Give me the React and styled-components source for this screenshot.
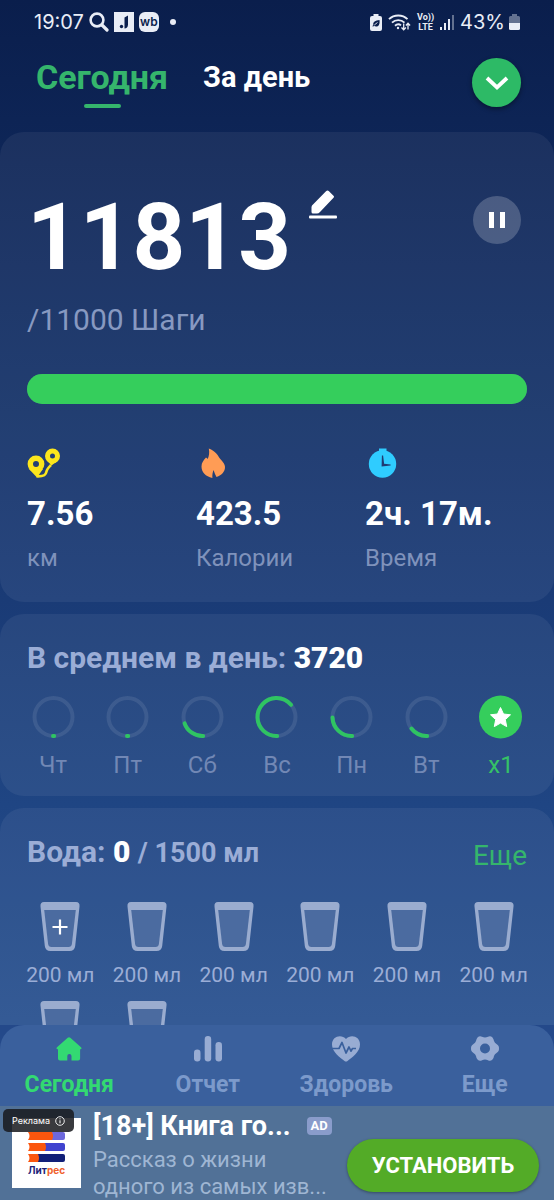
import React from "react";
import styled, { createGlobalStyle } from "styled-components";

const GlobalStyle = createGlobalStyle`
  * {
    box-sizing: border-box;
  }

  body {
    margin: 0;
    font-family: Roboto, "Noto Sans", sans-serif;
    color: #fff;
    background: #0b1f4d;
  }

  button {
    font: inherit;
    color: inherit;
    background: none;
    border: 0;
    padding: 0;
    cursor: pointer;
  }

  svg {
    display: block;
  }
`;

const Screen = styled.div`
  display: flex;
  flex-direction: column;
  height: 100vh;
  overflow: hidden;
  background: linear-gradient(180deg, #0a1e4c 0%, #0d2455 10%, #1a3b76 50%, #1f4583 67%, #28508f 85%, #28508f 100%);
`;

const StatusBar = styled.div`
  display: flex;
  justify-content: space-between;
  align-items: center;
  height: 44px;
  padding: 0 34px;
  font-family: Inter, Roboto, sans-serif;
  font-size: 20px;
  color: #e9edf6;
`;

const StatusGroup = styled.div`
  display: flex;
  align-items: center;
  gap: ${(props) => props.$gap}px;
`;

const Header = styled.header`
  display: flex;
  align-items: flex-start;
  height: 88px;
  padding: 14px 33px 0 36px;
`;

const Tab = styled.button`
  display: flex;
  flex-direction: column;
  align-items: center;
  margin-right: 35px;
  font-size: ${(props) => (props.$active ? 34 : 29)}px;
  line-height: 38px;
  font-weight: 700;
  color: ${(props) => (props.$active ? "#35b56c" : "#fff")};

  &::after {
    content: "";
    width: 37px;
    height: 4px;
    margin-top: 8px;
    border-radius: 2px;
    background: ${(props) => (props.$active ? "#35b56c" : "transparent")};
  }
`;

const RoundButton = styled.button`
  display: flex;
  align-items: center;
  justify-content: center;
  width: ${(props) => props.$size}px;
  height: ${(props) => props.$size}px;
  margin-left: auto;
  border-radius: 50%;
  background: ${(props) => (props.$green ? "#2dba66" : "rgba(255, 255, 255, 0.2)")};
  box-shadow: ${(props) => (props.$green ? "0 2px 5px rgba(0, 0, 0, 0.4)" : "none")};
`;

const Feed = styled.main`
  flex: 1;
  min-height: 0;
  display: flex;
  flex-direction: column;
  gap: 12px;
  overflow: hidden;
`;

const Card = styled.section`
  flex: none;
  padding: ${(props) => props.$padding};
  border-radius: 24px;
  background: rgba(255, 255, 255, 0.06);
`;

const StepsRow = styled.div`
  display: flex;
  align-items: flex-start;
  padding-right: 6px;

  ${RoundButton} {
    margin-top: 6px;
  }
`;

const StepCount = styled.div`
  font-size: 92px;
  line-height: 96px;
  font-weight: 700;
`;

const EditButton = styled.button`
  margin-left: 18px;
`;

const Goal = styled.p`
  margin: 16px 0 36px;
  font-size: 30px;
  line-height: 36px;
  color: #8799c1;
`;

const Bar = styled.div`
  height: 30px;
  border-radius: 15px;
  background: rgba(255, 255, 255, 0.12);
`;

const BarFill = styled.div`
  height: 100%;
  border-radius: 15px;
  background: #35ce5c;
`;

const Stats = styled.div`
  display: grid;
  grid-template-columns: 169px 169px 1fr;
  margin-top: 44px;
`;

const StatValue = styled.div`
  margin-top: 16px;
  font-size: 33px;
  line-height: 40px;
  font-weight: 700;
  white-space: nowrap;
`;

const StatLabel = styled.div`
  margin-top: 8px;
  font-size: 24px;
  line-height: 32px;
  color: #7f92bb;
`;

const CardHead = styled.div`
  display: flex;
  justify-content: space-between;
  align-items: flex-start;
  padding: 0 10px;
`;

const CardTitle = styled.h2`
  margin: 0;
  font-size: 30px;
  line-height: 36px;
  font-weight: 700;
  color: #9badd6;

  strong {
    color: #fff;
  }

  small {
    font-size: 27px;
  }
`;

const MoreLink = styled.a`
  padding-top: 4px;
  font-size: 28px;
  line-height: 36px;
  color: #35b56c;
  text-decoration: none;
`;

const Week = styled.div`
  display: flex;
  justify-content: space-between;
  margin-top: 19px;
`;

const Day = styled.div`
  display: flex;
  flex-direction: column;
  align-items: center;
  width: 52px;
  font-size: 24px;
  line-height: 28px;
  color: ${(props) => (props.$done ? "#35c266" : "#7288b5")};

  svg {
    margin-bottom: 12px;
  }
`;

const Glasses = styled.div`
  display: grid;
  grid-template-columns: repeat(6, 1fr);
  row-gap: 12px;
  margin-top: 28px;
`;

const Glass = styled.button`
  display: flex;
  flex-direction: column;
  align-items: center;
  gap: 9px;
  min-height: 87px;
  font-size: 21px;
  line-height: 28px;
  color: #9badd6;
  white-space: nowrap;
`;

const NavBack = styled.div`
  flex: none;
  background: #24498a;
`;

const Nav = styled.nav`
  display: grid;
  grid-template-columns: repeat(4, 1fr);
  height: 81px;
  padding-top: 10px;
  border-radius: 24px 24px 0 0;
  background: #3a609d;
`;

const NavItem = styled.a`
  display: flex;
  flex-direction: column;
  align-items: center;
  gap: 8px;
  font-size: 23px;
  line-height: 28px;
  font-weight: 700;
  text-decoration: none;
  color: ${(props) => (props.$active ? "#33d972" : "#7c9acb")};

  svg {
    color: ${(props) => (props.$active ? "#33d972" : "#98acd3")};
  }
`;

const Ad = styled.aside`
  position: relative;
  flex: none;
  display: flex;
  height: 94px;
  padding: 0 15px 0 12px;
  overflow: hidden;
  background: #517197;
`;

const AdTag = styled.div`
  position: absolute;
  top: 3px;
  left: 3px;
  display: flex;
  align-items: center;
  gap: 5px;
  height: 23px;
  padding: 0 9px;
  border-radius: 5px;
  font-family: Inter, Roboto, sans-serif;
  font-size: 9px;
  background: rgba(24, 26, 30, 0.86);
`;

const AdLogo = styled.div`
  flex: none;
  width: 69px;
  height: 70px;
  margin: 12px 12px 0 0;
  padding-top: 7px;
  background: #fff;
  text-align: center;
  font-family: Inter, Roboto, sans-serif;
  font-size: 10px;
  line-height: 12px;
  font-weight: 700;
  color: #1c2278;

  svg {
    margin: 0 auto 2px;
  }

  span {
    color: #f0602c;
  }
`;

const AdText = styled.div`
  flex: 1;
  min-width: 0;
`;

const AdTitle = styled.div`
  display: flex;
  align-items: center;
  gap: 16px;
  height: 40px;
  font-size: 27px;
  font-weight: 700;
  white-space: nowrap;
`;

const AdBadge = styled.span`
  padding: 0 4px;
  border-radius: 4px;
  font-size: 13px;
  line-height: 18px;
  background: #8a9ccb;
`;

const AdBody = styled.div`
  font-size: 22px;
  line-height: 27px;
  color: #9fb6d3;
  white-space: nowrap;
`;

const InstallButton = styled.button`
  flex: none;
  width: 192px;
  height: 53px;
  margin-top: 33px;
  border-radius: 27px;
  font-size: 22px;
  font-weight: 700;
  background: #53ab27;
  box-shadow: 0 1px 3px rgba(0, 0, 0, 0.35);
`;

const WbBadge = styled.span`
  display: flex;
  align-items: center;
  justify-content: center;
  width: 20px;
  height: 20px;
  border-radius: 6px;
  font-size: 12px;
  line-height: 18px;
  font-weight: 600;
  color: #0b1f4d;
  background: #e9edf6;
`;

const Dot = styled.span`
  width: 6px;
  height: 6px;
  margin-left: 6px;
  border-radius: 50%;
  background: #e9edf6;
`;

const VolteLabel = styled.span`
  display: flex;
  flex-direction: column;
  align-items: center;
  font-family: Roboto, sans-serif;
  font-size: 9px;
  line-height: 10px;
  font-weight: 700;
`;

const week = [
  { label: "Чт", value: 0.01 },
  { label: "Пт", value: 0.01 },
  { label: "Сб", value: 0.2 },
  { label: "Вс", value: 0.64 },
  { label: "Пн", value: 0.25 },
  { label: "Вт", value: 0.15 },
];

const glasses = ["200 мл", "200 мл", "200 мл", "200 мл", "200 мл", "200 мл", "", ""];

const SearchIcon = () => (
  <svg width="20" height="20" viewBox="0 0 20 20" fill="none" stroke="currentColor" strokeLinecap="round">
    <circle cx="8" cy="8" r="6.4" strokeWidth="2.6" />
    <path d="M13 13 18 18" strokeWidth="3.2" />
  </svg>
);

const NoteIcon = () => (
  <svg width="20" height="20" viewBox="0 0 20 20">
    <path d="M0 0h20v20H0z" fill="currentColor" />
    <path d="M10.5 5.5 14 3.5v9c0 2.5-1.5 4-3.5 4z" fill="#0b1f4d" />
    <circle cx="7.5" cy="14.5" r="1.7" fill="#0b1f4d" />
  </svg>
);

const EcoBatteryIcon = () => (
  <svg width="12" height="17" viewBox="0 0 12 17">
    <path d="M3.5 0h5v2H10a2 2 0 0 1 2 2v11a2 2 0 0 1-2 2H2a2 2 0 0 1-2-2V4a2 2 0 0 1 2-2h1.5z" fill="currentColor" />
    <path d="M9.500 6c.6 4.500-1 6.600-3.300 6.600-1 0-1.700-.3-2.200-.8l-1 .9-.6-.7 1-1C2.500 7.800 5.500 6.600 9.500 6z" fill="#0b1f4d" />
    <path d="M4.300 11 7.500 8.500" stroke="#e9edf6" strokeWidth="0.9" />
  </svg>
);

const WifiIcon = () => (
  <svg width="23" height="17" viewBox="0 0 23 17" fill="none" stroke="currentColor" strokeWidth="1.9">
    <path d="M1 5.200c5-5 13.500-5 18.500 0M4 8.700c3.500-3.500 9-3.500 12.500 0M7 11.700c2-1.800 4.300-1.800 6 -.3" />
    <circle cx="10" cy="14" r="1.2" fill="currentColor" stroke="none" />
    <path d="M15.700 9.500v6M13.500 13.500l2.200 2.300 2.200-2.300M20 15.500v-6M17.900 11.500 20 9.300l2.100 2.200" strokeWidth="1.3" />
  </svg>
);

const SignalIcon = () => (
  <svg width="14" height="15" viewBox="0 0 14 15" fill="currentColor">
    <rect x="0" y="12" width="2" height="3" />
    <rect x="4" y="8" width="2" height="7" />
    <rect x="8" y="4" width="2" height="11" />
    <rect x="12" y="0" width="2" height="15" opacity="0.4" />
  </svg>
);

const BatteryIcon = () => (
  <svg width="11" height="16" viewBox="0 0 11 16" fill="currentColor">
    <path d="M3 0h5v2h1.500A1.500 1.500 0 0 1 11 3.500V9H0V3.500A1.500 1.500 0 0 1 1.500 2H3z" opacity="0.4" />
    <path d="M0 9h11v5.500a1.500 1.500 0 0 1-1.500 1.500h-8A1.500 1.500 0 0 1 0 14.500z" />
  </svg>
);

const ChevronIcon = () => (
  <svg width="24" height="16" viewBox="0 0 24 16" fill="none" stroke="#fff" strokeWidth="3.8">
    <path d="M2 3 12 12.500 22 3" />
  </svg>
);

const EditIcon = () => (
  <svg width="28" height="30" viewBox="0 0 28 30" fill="#fff">
    <path d="M3 15.500 17 1.200q1.500-1.500 3 0L24.500 5.700q1 1 0 2L11 22Q9.500 23.500 8 23.500H4q-1.500 0-1.500-1.500v-5z" />
    <rect x="0" y="25.500" width="28" height="3" rx="1" />
  </svg>
);

const PauseIcon = () => (
  <svg width="16" height="16" viewBox="0 0 16 16" fill="#fff">
    <rect x="0" y="0" width="5" height="16" />
    <rect x="11" y="0" width="5" height="16" />
  </svg>
);

const RouteIcon = () => (
  <svg width="34" height="30" viewBox="0 0 34 30" fill="none" stroke="#fce61c">
    <circle cx="9" cy="16" r="5.700" strokeWidth="5.4" />
    <circle cx="25.500" cy="8" r="5" strokeWidth="5" />
    <path d="M1.500 20.500 10 29.500 16 21z" fill="#fce61c" stroke="none" />
    <path d="M19.500 12 24.500 17.500l6.500-5z" fill="#fce61c" stroke="none" />
    <path d="M9.500 28.300c7.500 .4 9.500-1.200 10-4.800.3-2.500 2-4 4.500-6.500" strokeWidth="2.6" />
  </svg>
);

const FlameIcon = () => (
  <svg width="34" height="30" viewBox="0 0 34 30" fill="#ff9c55">
    <path d="M12.800.5C19.500 3 22 7.500 23.500 10c2 2.500 5.500 5.500 5.500 9 0 4.500-3 8-8.500 10-1-1.800-2-4-3-7-.9 2.500-1.300 5-1.100 8C9.500 28.500 5.500 24 5.500 18.500c0-4 2-6 4.500-9 1 .5 1.300 1 1.700 1.500 1.300-3 2-6.500 1.100-10.500z" />
  </svg>
);

const ClockIcon = () => (
  <svg width="34" height="30" viewBox="0 0 34 30">
    <circle cx="17.500" cy="16" r="13.700" fill="#2fccff" />
    <rect x="14" y="0.500" width="7.500" height="4" fill="#2fccff" />
    <path d="M16.900 7.500h1.200l1 8.300 6.500.8v1l-9 .9z" fill="#1f3b73" />
  </svg>
);

const HomeIcon = () => (
  <svg width="28" height="28" viewBox="0 0 28 28" fill="currentColor">
    <path d="M12.700 2.800q1.300-1 2.600 0l10.700 9.500c1 .9.500 1.900-.5 1.900h-.4v9.300a2 2 0 0 1-2 2h-6.600v-4.500a2 2 0 0 0-4.200 0v4.500H5a2 2 0 0 1-2-2v-9.300h-.5c-1 0-1.500-1-.5-1.900z" />
  </svg>
);

const ReportIcon = () => (
  <svg width="28" height="28" viewBox="0 0 28 28" fill="currentColor">
    <rect x="0" y="14.500" width="6.500" height="12" rx="3.2" />
    <rect x="10.700" y="1" width="6.500" height="25.500" rx="3.2" />
    <rect x="21.500" y="7" width="6.500" height="19.500" rx="3.2" />
  </svg>
);

const HealthIcon = () => (
  <svg width="28" height="28" viewBox="0 0 28 28">
    <path d="M14 4C9.500-1 0 1 0 9.500 0 17 8 22.500 12.500 26q1.500 1.200 3 0C20 22.500 28 17 28 9.500 28 1 18.500-1 14 4z" fill="currentColor" />
    <path d="M0 13.500h7l3-6 4 10.500 3-6 2 4.200 1.500-2.700h3.500" fill="none" stroke="#3a609d" strokeWidth="1.7" strokeLinejoin="round" />
  </svg>
);

const GearIcon = () => (
  <svg width="28" height="28" viewBox="0 0 28 28">
    <path
      d="M6.500 2.500C8 1 9.500.8 11 1.800q3 1.200 6 0c1.500-1 3-.8 4.500.7q1.200 1.500 1.500 3.500 .7 2 2.500 3c2 1.200 2.500 2.500 2.500 4.500s-.5 3.300-2.500 4.500q-1.800 1-2.500 3-.3 2-1.500 3.500c-1.500 1.500-3 1.700-4.500.7q-3-1.200-6 0c-1.500 1-3 .8-4.500-.7Q5.300 23 5 21q-.7-2-2.500-3C.5 16.800 0 15.500 0 13.500S.5 10.200 2.500 9Q4.300 8 5 6q.3-2 1.500-3.500z"
      fill="currentColor"
    />
    <circle cx="14" cy="13.500" r="5" fill="#3a609d" />
  </svg>
);

const BooksIcon = () => (
  <svg width="37" height="37" viewBox="0 0 37 37">
    {["#6d68dc", "#4043cf", "#111f78"].map((color, i) => (
      <g key={color} transform={`translate(0 ${7 + i * 11})`}>
        <rect x="8" y="0" width="29" height="8" rx="2" fill={color} />
        <path d={`M0 0h${24 - i * 7}q2 4 0 8H0q3-4 0-8z`} fill="#fb560e" />
      </g>
    ))}
  </svg>
);

const InfoIcon = () => (
  <svg width="10" height="10" viewBox="0 0 10 10" fill="none" stroke="#fff">
    <circle cx="5" cy="5" r="4.3" strokeWidth="0.9" />
    <path d="M5 4.300v3M5 2.300v1" />
  </svg>
);

const RING = 2 * Math.PI * 19;

const DayRing = ({ value }) => (
  <svg width="43" height="44" viewBox="0 0 43 44" fill="none" strokeWidth="4">
    <circle cx="21.5" cy="22" r="19" stroke="rgba(255, 255, 255, 0.09)" />
    <circle
      cx="21.5"
      cy="22"
      r="19"
      stroke="#2fc462"
      strokeLinecap="round"
      strokeDasharray={`${value * RING} ${RING}`}
      transform="rotate(88 21.5 22)"
    />
  </svg>
);

const StarBadge = () => (
  <svg width="43" height="44" viewBox="0 0 43 44">
    <circle cx="21.5" cy="22" r="21.5" fill="#35ce5c" />
    <path
      d="M21.500 12.500 24.500 19l7 .8-5.200 4.800 1.400 7-6.200-3.500-6.200 3.500 1.400-7-5.200-4.800 7-.8z"
      fill="#fff"
      stroke="#fff"
      strokeLinejoin="round"
    />
  </svg>
);

const GlassIcon = ({ add }) => (
  <svg width="40" height="50" viewBox="0 0 40 50">
    <path d="M4 0h32q4 0 3.500 4.500l-4.300 39.500q-.6 5-5.700 5h-19q-5.100 0-5.700-5L.5 4.500Q0 0 4 0z" fill="#9aaccf" />
    <path d="M4.200 8h31.600l-3.900 34q-.4 3-3.400 3h-17q-3 0-3.400-3z" fill="#4b6ba0" />
    {add && <path d="M20 17.500v15M12.500 25h15" stroke="#fff" strokeWidth="2.2" />}
  </svg>
);

const App = () => {
  return (
    <Screen>
      <GlobalStyle />
      <StatusBar>
        <StatusGroup $gap={5}>
          <span>19:07</span>
          <SearchIcon />
          <NoteIcon />
          <WbBadge>wb</WbBadge>
          <Dot />
        </StatusGroup>
        <StatusGroup $gap={6}>
          <EcoBatteryIcon />
          <WifiIcon />
          <VolteLabel>
            <span>Vo))</span>
            <span>LTE</span>
          </VolteLabel>
          <SignalIcon />
          <StatusGroup $gap={4}>
            <span>43%</span>
            <BatteryIcon />
          </StatusGroup>
        </StatusGroup>
      </StatusBar>

      <Header>
        <Tab $active>Сегодня</Tab>
        <Tab>За день</Tab>
        <RoundButton $green $size={49} aria-label="Развернуть">
          <ChevronIcon />
        </RoundButton>
      </Header>

      <Feed>
        <Card $padding="58px 27px 28px">
          <StepsRow>
            <StepCount>11813</StepCount>
            <EditButton aria-label="Изменить">
              <EditIcon />
            </EditButton>
            <RoundButton $size={48} aria-label="Пауза">
              <PauseIcon />
            </RoundButton>
          </StepsRow>
          <Goal>/11000 Шаги</Goal>
          <Bar>
            <BarFill style={{ width: "100%" }} />
          </Bar>
          <Stats>
            <div>
              <RouteIcon />
              <StatValue>7.56</StatValue>
              <StatLabel>км</StatLabel>
            </div>
            <div>
              <FlameIcon />
              <StatValue>423.5</StatValue>
              <StatLabel>Калории</StatLabel>
            </div>
            <div>
              <ClockIcon />
              <StatValue>2ч. 17м.</StatValue>
              <StatLabel>Время</StatLabel>
            </div>
          </Stats>
        </Card>

        <Card $padding="26px 27px 17px">
          <CardTitle>
            В среднем в день: <strong>3720</strong>
          </CardTitle>
          <Week>
            {week.map((day) => (
              <Day key={day.label}>
                <DayRing value={day.value} />
                {day.label}
              </Day>
            ))}
            <Day $done>
              <StarBadge />
              x1
            </Day>
          </Week>
        </Card>

        <Card $padding="26px 17px 28px">
          <CardHead>
            <CardTitle>
              Вода: <strong>0</strong> <small>/ 1500 мл</small>
            </CardTitle>
            <MoreLink href="#water">Еще</MoreLink>
          </CardHead>
          <Glasses>
            {glasses.map((amount, i) => (
              <Glass key={i} aria-label={amount || "Стакан"}>
                <GlassIcon add={i === 0} />
                {amount}
              </Glass>
            ))}
          </Glasses>
        </Card>
      </Feed>

      <NavBack>
        <Nav>
          <NavItem href="#today" $active>
            <HomeIcon />
            Сегодня
          </NavItem>
          <NavItem href="#report">
            <ReportIcon />
            Отчет
          </NavItem>
          <NavItem href="#health">
            <HealthIcon />
            Здоровь
          </NavItem>
          <NavItem href="#more">
            <GearIcon />
            Еще
          </NavItem>
        </Nav>
      </NavBack>

      <Ad>
        <AdLogo>
          <BooksIcon />
          Лит<span>рес</span>
        </AdLogo>
        <AdText>
          <AdTitle>
            [18+] Книга го... <AdBadge>AD</AdBadge>
          </AdTitle>
          <AdBody>
            Рассказ о жизни
            <br />
            одного из самых изв...
          </AdBody>
        </AdText>
        <InstallButton>УСТАНОВИТЬ</InstallButton>
        <AdTag>
          Реклама <InfoIcon />
        </AdTag>
      </Ad>
    </Screen>
  );
};

export default App;
